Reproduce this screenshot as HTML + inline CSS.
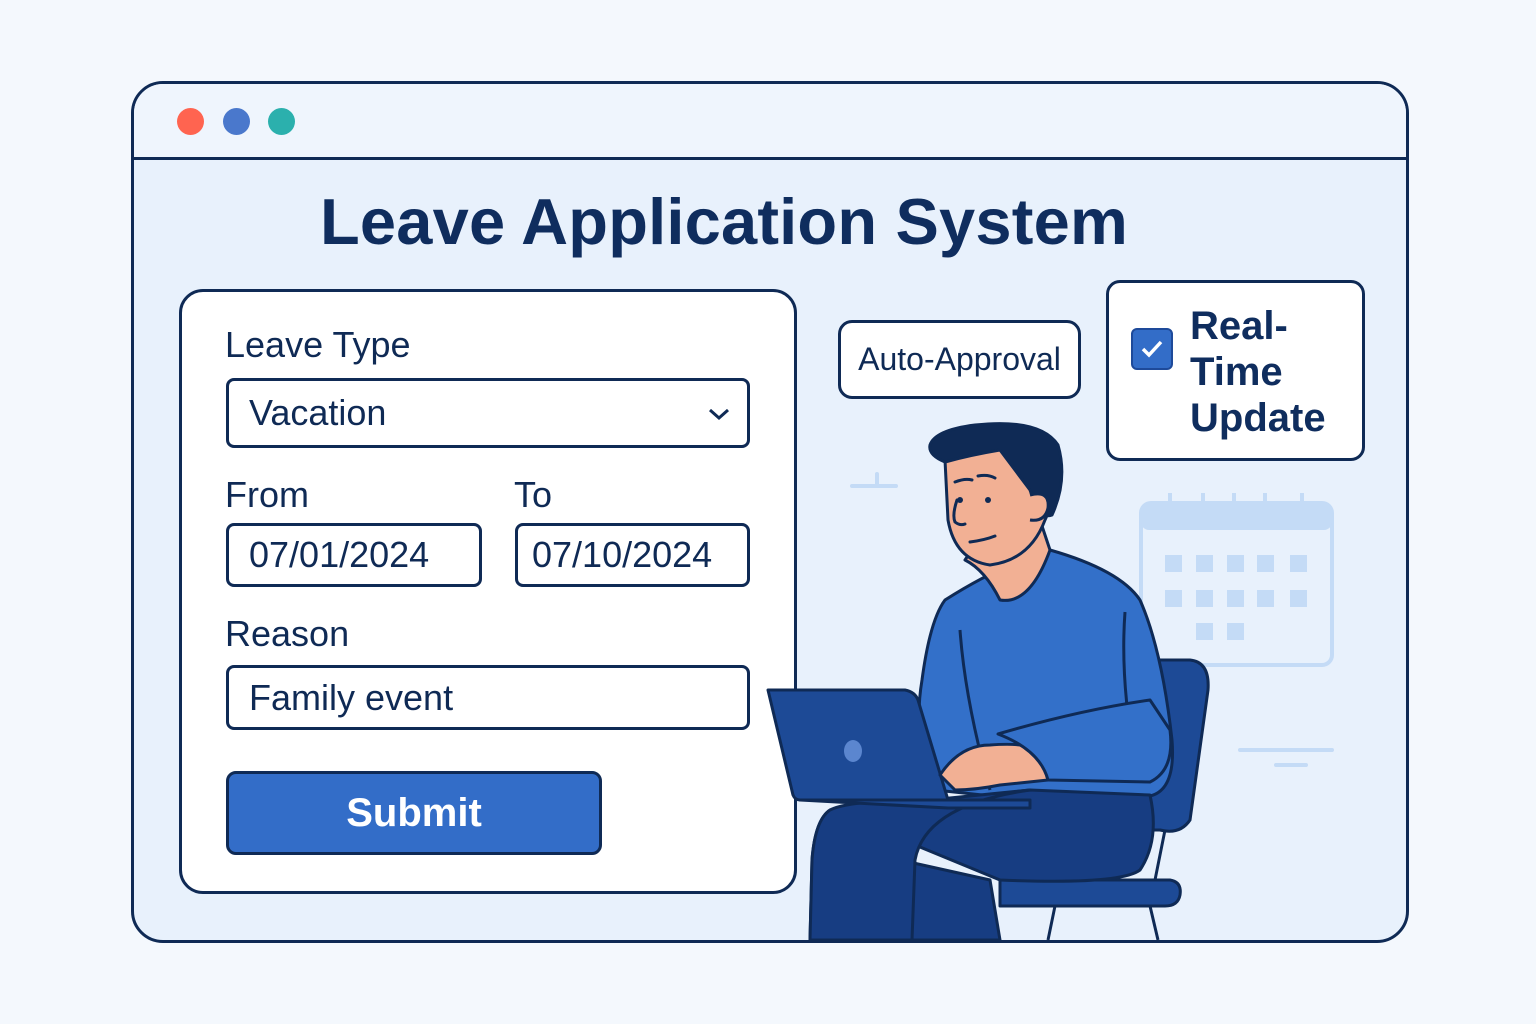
<!DOCTYPE html>
<html><head><style>
body{margin:0;width:1536px;height:1024px;background:#f4f8fd;position:relative;overflow:hidden;font-family:"Liberation Sans","DejaVu Sans",sans-serif;color:#0f2a55}
.win{position:absolute;left:131px;top:81px;width:1272px;height:856px;border:3px solid #0f2a55;border-radius:32px;background:#e8f1fc;overflow:hidden}
.bar{position:absolute;left:0;top:0;right:0;height:73px;background:#eff5fd;border-bottom:3px solid #0f2a55}
.dot{position:absolute;top:24px;width:27px;height:27px;border-radius:50%}
.title{position:absolute;left:320px;top:184px;font-size:65px;font-weight:bold;color:#0f2d5e;letter-spacing:0.2px;white-space:nowrap}
.card{position:absolute;left:179px;top:289px;width:612px;height:599px;background:#fff;border:3px solid #0f2a55;border-radius:24px}
.lbl{position:absolute;font-size:36px;color:#0f2a55}
.inp{position:absolute;border:3px solid #0f2a55;border-radius:8px;background:#fff;font-size:36px;box-sizing:border-box;padding-left:20px;display:flex;align-items:center}
.btn{position:absolute;left:226px;top:771px;width:376px;height:84px;box-sizing:border-box;border:3px solid #0f2a55;border-radius:10px;background:#336dc8;color:#fff;font-size:40px;font-weight:bold;display:flex;align-items:center;justify-content:center}
.box{position:absolute;background:#fff;border:3px solid #0f2a55;border-radius:14px;box-sizing:border-box}
</style></head><body>
<div class="win">
<div class="bar">
<div class="dot" style="left:43px;background:#ff6450"></div>
<div class="dot" style="left:89px;background:#4a78cc"></div>
<div class="dot" style="left:134px;background:#2bb0ad"></div>
</div>
</div>
<div class="title">Leave Application System</div>
<div class="card"></div>
<div class="lbl" style="left:225px;top:324px">Leave Type</div>
<div class="inp" style="left:226px;top:378px;width:524px;height:70px">Vacation
<svg style="position:absolute;right:16px;top:26px" width="24" height="14" viewBox="0 0 24 14"><path d="M3 3 L12 11 L21 3" fill="none" stroke="#0f2a55" stroke-width="3"/></svg></div>
<div class="lbl" style="left:225px;top:474px">From</div>
<div class="lbl" style="left:514px;top:474px">To</div>
<div class="inp" style="left:226px;top:523px;width:256px;height:64px">07/01/2024</div>
<div class="inp" style="left:515px;top:523px;width:235px;height:64px;padding-left:14px">07/10/2024</div>
<div class="lbl" style="left:225px;top:613px">Reason</div>
<div class="inp" style="left:226px;top:665px;width:524px;height:65px">Family event</div>
<div class="btn">Submit</div>
<div class="box" style="left:838px;top:320px;width:243px;height:79px;display:flex;align-items:center;justify-content:center;font-size:32px">Auto-Approval</div>
<div class="box" style="left:1106px;top:280px;width:259px;height:181px">
<div style="position:absolute;left:22px;top:45px;width:42px;height:42px;background:#336dc8;border-radius:6px;border:2px solid #1e4a9a;box-sizing:border-box">
<svg width="38" height="38" viewBox="0 0 38 38"><path d="M10 19 L16 25 L28 12" fill="none" stroke="#fff" stroke-width="3.5"/></svg></div>
<div style="position:absolute;left:81px;top:20px;font-size:40px;line-height:46px;font-weight:bold;color:#0f2d5e">Real-<br>Time<br>Update</div>
</div>
<svg width="1536" height="1024" style="position:absolute;left:0;top:0" viewBox="0 0 1536 1024">
<g stroke="#c4dbf6" stroke-width="4" fill="none" stroke-linecap="round">
<path d="M852 486 H896 M877 474 V486"/>
<path d="M1240 750 H1332 M1276 765 H1306"/>
</g>
<rect x="1141" y="503" width="191" height="162" rx="10" fill="none" stroke="#c4dbf6" stroke-width="4"/>
<rect x="1141" y="503" width="191" height="27" rx="8" fill="#c4dbf6"/>
<g stroke="#c4dbf6" stroke-width="4"><path d="M1170 493V515M1203 493V515M1234 493V515M1265 493V515M1302 493V515"/></g>
<g fill="#c4dbf6">
<rect x="1165" y="555" width="17" height="17"/><rect x="1196" y="555" width="17" height="17"/><rect x="1227" y="555" width="17" height="17"/><rect x="1257" y="555" width="17" height="17"/><rect x="1290" y="555" width="17" height="17"/>
<rect x="1165" y="590" width="17" height="17"/><rect x="1196" y="590" width="17" height="17"/><rect x="1227" y="590" width="17" height="17"/><rect x="1257" y="590" width="17" height="17"/><rect x="1290" y="590" width="17" height="17"/>
<rect x="1196" y="623" width="17" height="17"/><rect x="1227" y="623" width="17" height="17"/>
</g>
<g stroke="#0f2a55" stroke-width="3" stroke-linejoin="round">
<!-- chair -->
<path d="M1120 660 H1190 Q1210 662 1208 690 L1190 820 Q1180 835 1160 830 L1120 830 Z" fill="#1d4a96"/>
<path d="M1000 880 H1170 Q1182 882 1180 895 Q1178 906 1165 906 H1000 Z" fill="#1d4a96"/>
<path d="M1055 906 L1048 940 M1150 906 L1158 940 M1165 830 L1155 880" fill="none"/>
<!-- torso -->
<path d="M945 600 Q1000 565 1050 550 Q1120 570 1140 600 Q1162 650 1172 740 Q1176 790 1150 796 L1030 800 L935 790 Q912 740 922 680 Q930 620 945 600 Z" fill="#3370c9"/>
<path d="M960 630 Q965 700 990 790 M1125 612 Q1120 680 1135 760" fill="none"/>
<!-- legs -->
<path d="M830 810 Q815 820 812 860 L810 940 H895 L900 860 L990 880 L1000 940 H910 L912 860 Q930 800 1030 790 L1150 795 Q1160 840 1140 870 Q1120 885 1000 880 Z" fill="#173d82"/>
<path d="M830 810 Q850 800 930 800 L1030 790 Q925 805 915 860 L912 940 H810 L812 860 Q815 820 830 810 Z" fill="#173d82"/>
<!-- laptop -->
<path d="M768 690 L905 690 Q915 692 918 700 L948 800 H800 Q795 800 793 795 Z" fill="#1d4a96"/>
<path d="M800 800 H1030 V808 L948 808 Z" fill="#1d4a96"/>
<ellipse cx="853" cy="751" rx="9" ry="11" fill="#5b86cf" stroke="none"/>
<!-- hand -->
<path d="M940 775 Q960 745 990 745 Q1030 742 1040 752 L1048 780 L1000 785 Q975 790 955 790 Z" fill="#f2b094"/>
<!-- arm -->
<path d="M998 734 Q1080 710 1150 700 L1170 730 Q1175 770 1150 782 L1048 780 Q1040 750 998 734 Z" fill="#3370c9"/>
<!-- neck -->
<path d="M965 560 Q985 570 1000 600 Q1030 605 1050 550 L1040 520 L985 530 Z" fill="#f2b094"/>
<!-- head -->
<path d="M945 460 Q960 440 1000 450 Q1030 455 1040 480 Q1055 500 1045 520 Q1030 560 990 565 Q955 560 948 520 Z" fill="#f2b094"/>
<path d="M930 445 Q935 430 975 425 Q1040 418 1058 445 Q1068 480 1052 515 Q1040 520 1030 490 Q1015 470 1000 450 Q970 455 945 462 Q928 455 930 445 Z" fill="#0f2a55"/>
<path d="M1030 495 Q1050 490 1048 508 Q1045 522 1030 520" fill="#f2b094"/>
</g>
<g stroke="#0f2a55" stroke-width="3" fill="none" stroke-linecap="round">
<path d="M955 482 Q965 478 972 480 M978 476 Q988 474 995 478"/>
<path d="M957 500 Q952 515 955 522 Q960 526 965 524"/>
<path d="M970 542 Q985 540 995 536"/>
</g>
<circle cx="988" cy="500" r="3" fill="#0f2a55"/>
<circle cx="960" cy="500" r="3" fill="#0f2a55"/>
</svg>
</body></html>
